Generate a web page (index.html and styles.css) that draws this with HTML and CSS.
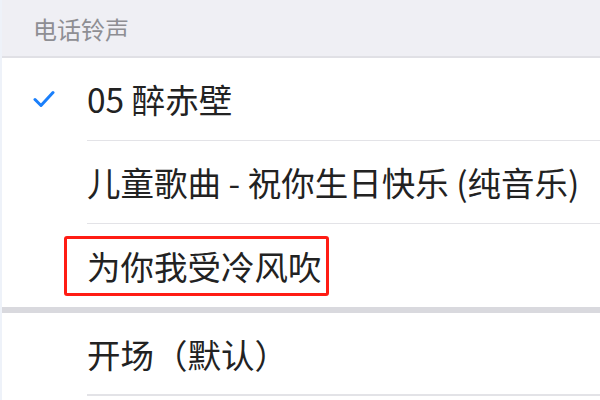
FILE: index.html
```html
<!DOCTYPE html>
<html lang="zh-cn">
<head>
    <meta charset="UTF-8">
    <title>电话铃声</title>
    <link rel="stylesheet" href="styles.css">
</head>
<body>
    <div class="screen">
        <div class="section-head">电话铃声</div>

        <ul class="list">
            <li class="item">
                <span class="check">
                    <svg width="22" height="18" viewBox="0 0 22 18">
                        <polyline points="2,9.5 8,15.5 20,2.5" fill="none" stroke="#1a7ffb" stroke-width="3" stroke-linecap="round" stroke-linejoin="round"/>
                    </svg>
                </span>
                <div class="cell">05 醉赤壁</div>
            </li>
            <li class="item">
                <span class="check"></span>
                <div class="cell">儿童歌曲 - 祝你生日快乐 (纯音乐)</div>
            </li>
            <li class="item">
                <span class="check"></span>
                <div class="cell"><span class="mark">为你我受冷风吹</span></div>
            </li>
        </ul>

        <ul class="list">
            <li class="item">
                <span class="check"></span>
                <div class="cell">开场（默认）</div>
            </li>
        </ul>
    </div>
</body>
</html>
```

FILE: styles.css
```css
* {
    box-sizing: border-box;
}
body {
    margin: 0;
    background: #fff;
    font-family: "Noto Sans CJK SC", "Noto Sans", sans-serif;
    color: #222;
}
.screen {
    width: 600px;
    height: 400px;
    overflow: hidden;
    border-left: 2px solid #eef2f9;
}
.section-head {
    height: 58px;
    padding: 14px 0 0 31px;
    background: #efeff4;
    border-bottom: 2px solid #e0e0e5;
    font-size: 24px;
    line-height: 30px;
    color: #8e8e93;
}
.list {
    margin: 0;
    padding: 0;
    list-style: none;
}
.list + .list {
    border-top: 6px solid #d9d9de;
}
.item {
    display: flex;
    padding-left: 31px;
}
.check {
    flex: none;
    width: 54px;
    display: flex;
    align-items: center;
    padding-bottom: 2px;
}
.cell {
    flex: 1;
    height: 83px;
    display: flex;
    align-items: center;
    border-bottom: 1px solid #e3e3e7;
    font-size: 33.5px;
    line-height: 40px;
}
.list .item:last-child .cell {
    border-bottom: none;
}
.list + .list .item:last-child .cell {
    height: 83px;
    border-bottom: 2px solid #e3e3e7;
}
.mark {
    margin-left: -23px;
    padding: 7px 4px 7px 20px;
    border: 3px solid #ff1c14;
    border-radius: 3px;
}
```
